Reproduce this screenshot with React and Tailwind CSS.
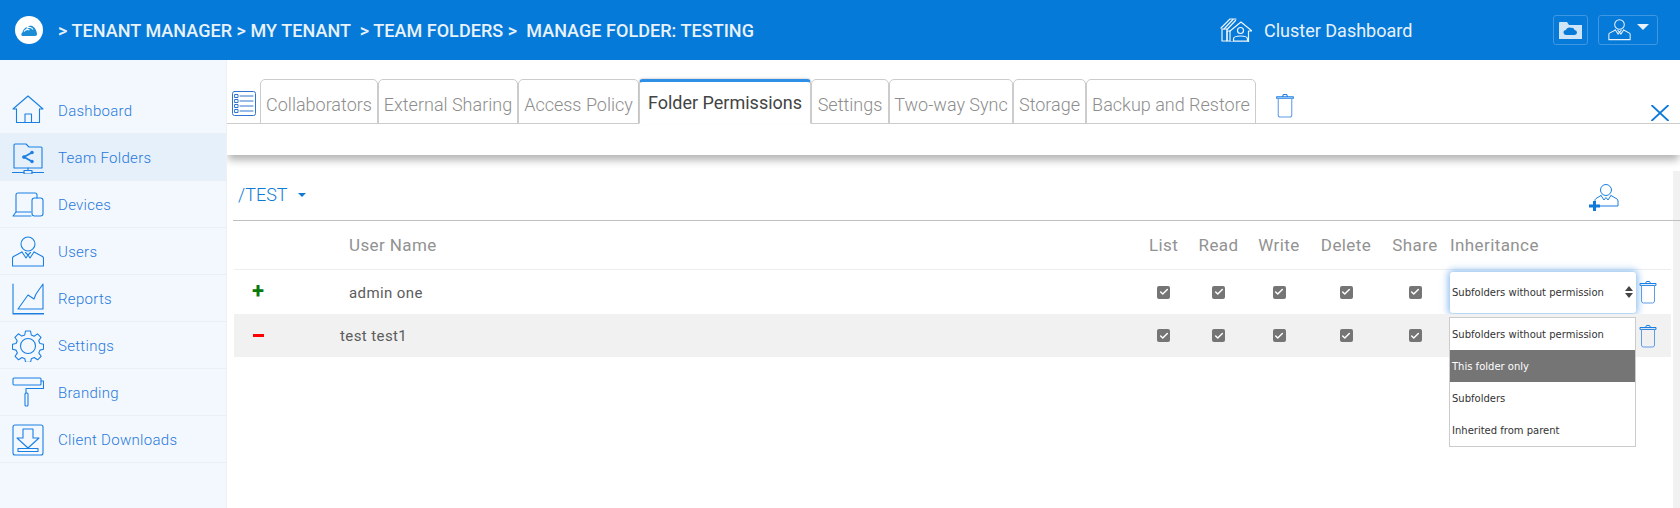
import { Check } from 'lucide-react';

const ROBOTO = "font-['Roboto',sans-serif]";

function Svg({ className, viewBox = '0 0 32 32', children, stroke = '#1a7fe3', sw = 1.1 }) {
  return (
    <svg className={className} viewBox={viewBox} fill="none" stroke={stroke} strokeWidth={sw} strokeLinejoin="round" strokeLinecap="round">
      {children}
    </svg>
  );
}

const icons = {
  home: (
    <>
      <path d="M1 14 16 1l15 13h-3.500M4.500 14H1" />
      <path d="M4.500 14v13.500h23V14" />
      <path d="M13 27.500V19h6.500v8.500" />
    </>
  ),
  folders: (
    <>
      <path d="M2 26V3a1 1 0 0 1 1-1h11l3 3h12a1 1 0 0 1 1 1v20z" />
      <path d="M20 10.500 12 15l8 4.500" strokeWidth="1.800" />
      <circle cx="12" cy="15" r="1.300" fill="#1a7fe3" />
      <circle cx="20" cy="10.500" r="1.200" fill="#1a7fe3" />
      <circle cx="20" cy="19.500" r="1.200" fill="#1a7fe3" />
      <path d="M16 26v2.500M0.500 30.500H12M20 30.500h11.500" />
      <rect x="12" y="28.500" width="8" height="3.500" />
    </>
  ),
  devices: (
    <>
      <path d="M4 23V6a2 2 0 0 1 2-2h17a2 2 0 0 1 2 2v3" />
      <path d="M1 27l3-4h15M1 27h18" />
      <rect x="20" y="9" width="11" height="18" rx="2.500" />
    </>
  ),
  user: (
    <>
      <circle cx="16" cy="8" r="7" />
      <path d="M10 16 1.500 20.500c-.6.400-1 1-1 2V30h31v-7.500c0-1-.4-1.600-1-2L22 16" />
      <path d="m10 16 4 6 2-3 2 3 4-6M16 19l-2.500-2.500M16 19l2.500-2.500" />
    </>
  ),
  reports: (
    <>
      <path d="M1 1v29.500h31" />
      <path d="M31 1 24 11l-2 5-6-4-10 14h25z" />
      <path d="M1 31.500h31" stroke="#8fb8ea" />
    </>
  ),
  gear: (
    <>
      <circle cx="16" cy="16" r="7.500" />
      <path d="M13.500 1h5l.8 4 2.800 1.200 3.400-2.300 3.500 3.500-2.300 3.400L28 13.500l3.500.8v5l-3.500.8-1.200 2.800 2.300 3.400-3.500 3.500-3.400-2.300-2.800 1.200-.8 3.500h-5l-.8-3.500-2.800-1.200-3.400 2.300-3.500-3.500 2.300-3.400L4 20.100.5 19.300v-5L4 13.500l1.200-2.800-2.300-3.400 3.500-3.500 3.400 2.300L12.700 5z" />
    </>
  ),
  roller: (
    <>
      <rect x="1" y="1" width="28" height="7" rx="1" />
      <path d="M29 4h2.500v7.500H14V16" />
      <rect x="13" y="16" width="3" height="13" rx="1" />
    </>
  ),
  download: (
    <>
      <rect x="1" y="1" width="30" height="30" rx="2" />
      <path d="M11 5h10v9h6l-11 10L5 14h6z" />
      <rect x="6" y="24.500" width="20" height="3" />
    </>
  ),
};

const navItems = [
  { label: 'Dashboard', icon: 'home', h: 'h-[74px]', pt: 'pt-[29px]' },
  { label: 'Team Folders', icon: 'folders', active: true },
  { label: 'Devices', icon: 'devices' },
  { label: 'Users', icon: 'user' },
  { label: 'Reports', icon: 'reports' },
  { label: 'Settings', icon: 'gear' },
  { label: 'Branding', icon: 'roller' },
  { label: 'Client Downloads', icon: 'download' },
];

const tabs = [
  { label: 'Collaborators', w: 'w-[118px]' },
  { label: 'External Sharing', w: 'w-[140px]' },
  { label: 'Access Policy', w: 'w-[121px]' },
  { label: 'Folder Permissions', w: 'w-[172px]', active: true },
  { label: 'Settings', w: 'w-[78px]' },
  { label: 'Two-way Sync', w: 'w-[124px]' },
  { label: 'Storage', w: 'w-[73px]' },
  { label: 'Backup and Restore', w: 'w-[170px]' },
];

function Trash({ className }) {
  return (
    <Svg className={className} viewBox="0 0 18 24" sw={1}>
      <path d="M1 5V3.500h16V5zM6.500 3.500 7.500 1.500h3l1 2" />
      <path d="M2.500 5.500V21a2 2 0 0 0 2 2h9a2 2 0 0 0 2-2V5.500" stroke="#5f9be8" />
    </Svg>
  );
}

function Checkbox() {
  return (
    <span className="w-[13px] h-[13px] rounded-[2px] bg-[#757575] flex items-center justify-center">
      <Check size={10} strokeWidth={3.5} color="#fff" />
    </span>
  );
}

const colClass = 'grid grid-cols-[115px_1fr_55px_55px_66px_68px_70px_221px] items-center';

function PermRow({ name, sign, shaded, nameClass, children }) {
  return (
    <div className={`${colClass} ${shaded ? 'bg-[#f1f1f1] h-[43px]' : 'h-[44px]'}`}>
      <span className="pl-[18px] flex">{sign}</span>
      <span className={`pt-[2px] text-[15px] tracking-[0.4px] text-[#5c5c5c] ${nameClass}`}>{name}</span>
      {[0, 1, 2, 3, 4].map((i) => (
        <span key={i} className="flex justify-center"><Checkbox /></span>
      ))}
      {children}
    </div>
  );
}

export default function App() {
  return (
    <div className={`${ROBOTO} w-[1680px] h-[508px] overflow-hidden bg-white flex flex-col`}>
      {/* top bar */}
      <header className="h-[60px] shrink-0 bg-[#067ad9] flex items-center text-white relative z-20">
        <div className="ml-[15px] w-[28px] h-[28px] rounded-full bg-white flex items-center justify-center">
          <svg className="w-[16px] h-[11px]" viewBox="0 0 16 11">
            <path d="M1.500 11C0 11 0 8 1.500 7.500 2 4 5 2 7 2c1-1.500 4-2 5.500 0 2 1 3.500 5 3.500 7 0 1-.5 2-2 2z" fill="#1a8dd6" />
            <path d="M3 6.500C4.500 4.500 7 4 8.500 5M5.500 3.500C7.500 2 10.500 2 12 4.500" stroke="#fff" strokeWidth="1.200" fill="none" />
          </svg>
        </div>
        <div className="ml-[15px] text-[18px] tracking-[0.05px] font-medium text-[#e8f2fb] whitespace-pre w-[1163px]">
          {'> TENANT MANAGER > MY TENANT  > TEAM FOLDERS >  MANAGE FOLDER: TESTING'}
        </div>
        <Svg className="w-[32px] h-[24px] -ml-[1px]" viewBox="0 0 32 24" stroke="#f0f6fc" sw={1.2}>
          <path d="M1 10 10 1h6M4 11l9-9.500M7 11.500 15.500 2.500" />
          <path d="M10 13 21 4l11 9h-3.500v11H10" />
          <rect x="2" y="11" width="5" height="12" />
          <rect x="7" y="13" width="3" height="10" />
          <circle cx="20.500" cy="12.500" r="3" />
          <path d="M13.500 23v-2c0-2 3.500-3 7-3s7 1 7 3v2z" />
        </Svg>
        <span className="ml-[12px] text-[18px] text-[#e8f2fb] w-[289px]">Cluster Dashboard</span>
        <button className="w-[35px] h-[30px] rounded-[3px] border border-[#3d97e2] flex items-center justify-center">
          <svg className="w-[23px] h-[18px]" viewBox="0 0 23 18">
            <path d="M0 2a1 1 0 0 1 1-1h7l2 3h13v14H0z" fill="#cfe4f7" />
            <path d="M7 14a2.500 2.500 0 0 1 0-5c.500-2 3-3 5-2 1.500-.5 3 .5 3.500 2a2.500 2.500 0 0 1 0 5z" fill="#067ad9" />
          </svg>
        </button>
        <button className="ml-[10px] w-[60px] h-[30px] rounded-[3px] border border-[#3d97e2] flex items-center pl-[9px] gap-[6px]">
          <Svg className="w-[23px] h-[22px]" viewBox="0 0 32 32" stroke="#e8f2fb" sw={1.5}>
            {icons.user}
          </Svg>
          <span className="w-0 h-0 border-l-[6px] border-r-[6px] border-t-[6px] border-l-transparent border-r-transparent border-t-[#e8f2fb] mb-[6px]" />
        </button>
      </header>

      <div className="flex flex-1 min-h-0">
        {/* sidebar */}
        <aside className="w-[227px] shrink-0 bg-[#f3f8fe] border-r border-[#eef1f4] relative z-10">
          {navItems.map((item) => (
            <div
              key={item.label}
              className={`flex items-center pl-[12px] border-b border-[#eaeff5] ${item.h || 'h-[47px]'} ${item.pt || 'pt-[2px]'} ${item.active ? 'bg-[#e5f0fa]' : ''}`}
            >
              <Svg className="w-[32px] h-[32px] shrink-0">{icons[item.icon]}</Svg>
              <span className="ml-[14px] text-[15px] font-light text-[#2878dc] tracking-[0.3px]">{item.label}</span>
            </div>
          ))}
        </aside>

        {/* main */}
        <main className="flex-1 min-w-0 flex flex-col">
          <div className="h-[95px] shrink-0 bg-white shadow-[0_6px_8px_-1px_rgba(0,0,0,0.3)] relative">
            <div className="h-[64px] pt-[19px] flex items-end border-b border-[#cccccc]">
              <Svg className="w-[24px] h-[25px] ml-[5px] mr-[4px] mb-[7px]" viewBox="0 0 24 25" sw={1} stroke="#2f74cf">
                <rect x="0.500" y="0.500" width="23" height="24" rx="2" />
                <path d="M8 5h13M8 10h13M8 15h13M8 20h13" />
                <rect x="3" y="3.500" width="3" height="3" />
                <rect x="3" y="8.500" width="3" height="3" />
                <rect x="3" y="13.500" width="3" height="3" />
                <rect x="3" y="18.500" width="3" height="3" />
              </Svg>
              {tabs.map((tab) => (
                <div
                  key={tab.label}
                  className={`${tab.w} h-[45px] -mb-px flex items-center justify-center whitespace-nowrap text-[18px] ${
                    tab.active
                      ? 'border-t-[3px] border-t-[#2e8fe6] border-x border-x-[#cccccc] bg-white text-[#444444] rounded-t-[4px] border-b border-b-white shadow-[0_-1px_2px_rgba(0,0,0,0.15)]'
                      : 'border border-[#cccccc] border-b-[#cccccc] rounded-t-[5px] text-[#8d8d8d] font-light pt-[5px]'
                  }`}
                >
                  {tab.label}
                </div>
              ))}
              <Trash className="w-[20px] h-[25px] ml-[19px] mb-[5px]" />
            </div>
            <Svg className="absolute left-[1424px] top-[45px] w-[18px] h-[16px]" viewBox="0 0 18 16" sw={1.8} stroke="#0f7ad8">
              <path d="M1 0.500 17 15.500M17 0.500 1 15.500" />
            </Svg>
          </div>

          <div className="flex-1 min-h-0 flex">
            <div className="flex-1 min-w-0 pl-[7px] pr-[2px]">
              <div className="h-[66px] border-b border-[#c0c0c0] -ml-[1px] -mr-[9px] flex items-center pl-[5px] pt-[14px] relative">
                <span className="text-[18px] font-light text-[#0f7ad8] leading-none">/TEST</span>
                <span className="ml-[10px] w-0 h-0 border-l-[4px] border-r-[4px] border-t-[4px] border-l-transparent border-r-transparent border-t-[#0f7ad8]" />
                <Svg className="absolute left-[1356px] top-[29px] w-[30px] h-[28px]" viewBox="0 0 30 28" sw={1}>
                  <circle cx="17" cy="6" r="5.500" />
                  <path d="M5 22h24v-5c0-1-.4-1.500-1-2l-6-3.500M12 11.500 7 14.500c-.6.400-1 1-1 2V19" />
                  <path d="m12 11.500 3 4.500 2-2.500 2 2.500 3-4.500" />
                  <path d="M5.500 17v10M0 22h11" strokeWidth="3" stroke="#0f7ad8" strokeLinecap="butt" />
                </Svg>
              </div>

              <div className={`${colClass} h-[49px] pt-[2px] border-b border-[#eeeeee] text-[17px] tracking-[0.4px] text-[#929292]`}>
                <span />
                <span>User Name</span>
                <span className="text-center">List</span>
                <span className="text-center">Read</span>
                <span className="text-center">Write</span>
                <span className="text-center">Delete</span>
                <span className="text-center">Share</span>
                <span className="whitespace-nowrap">Inheritance</span>
              </div>

              <PermRow
                name="admin one"
                nameClass=""
                sign={<span className="font-bold text-[22px] leading-none text-[#0a7a0a] -mt-[2px]">+</span>}
              >
                <div className="flex items-center">
                  <div className="w-[186px] h-[41px] rounded-[3px] bg-white shadow-[0_0_7px_2px_rgba(70,150,230,0.6)] flex items-center justify-between pl-[2px] pr-[3px] font-['DejaVu_Sans',sans-serif] text-[10px] text-[#333333]">
                    <span>Subfolders without permission</span>
                    <svg className="w-[8px] h-[12px]" viewBox="0 0 8 12"><path d="M4 0l4 5H0zM4 12 0 7h8z" fill="#444444" /></svg>
                  </div>
                  <Trash className="w-[18px] h-[24px] ml-[3px]" />
                </div>
              </PermRow>

              <div className="relative">
                <PermRow
                  name="test test1"
                  nameClass="-ml-[9px]"
                  shaded
                  sign={<span className="block w-[11px] h-[3px] ml-[1px] bg-[#ff0000]" />}
                >
                  <div className="flex items-center pl-[189px]">
                    <Trash className="w-[18px] h-[24px]" />
                  </div>
                </PermRow>
                <div className="absolute left-[1215px] top-[3px] w-[187px] border border-[#cccccc] bg-white font-['DejaVu_Sans',sans-serif] text-[10px] text-[#333333] z-10">
                  {['Subfolders without permission', 'This folder only', 'Subfolders', 'Inherited from parent'].map((opt, i) => (
                    <div key={opt} className={`h-[32px] flex items-center pl-[2px] ${i === 1 ? 'bg-[#757575] text-white' : ''}`}>
                      {opt}
                    </div>
                  ))}
                </div>
              </div>
            </div>
            <div className="w-[7px] shrink-0 mt-[16px] bg-[#f1f1f1]" />
          </div>
        </main>
      </div>
    </div>
  );
}
